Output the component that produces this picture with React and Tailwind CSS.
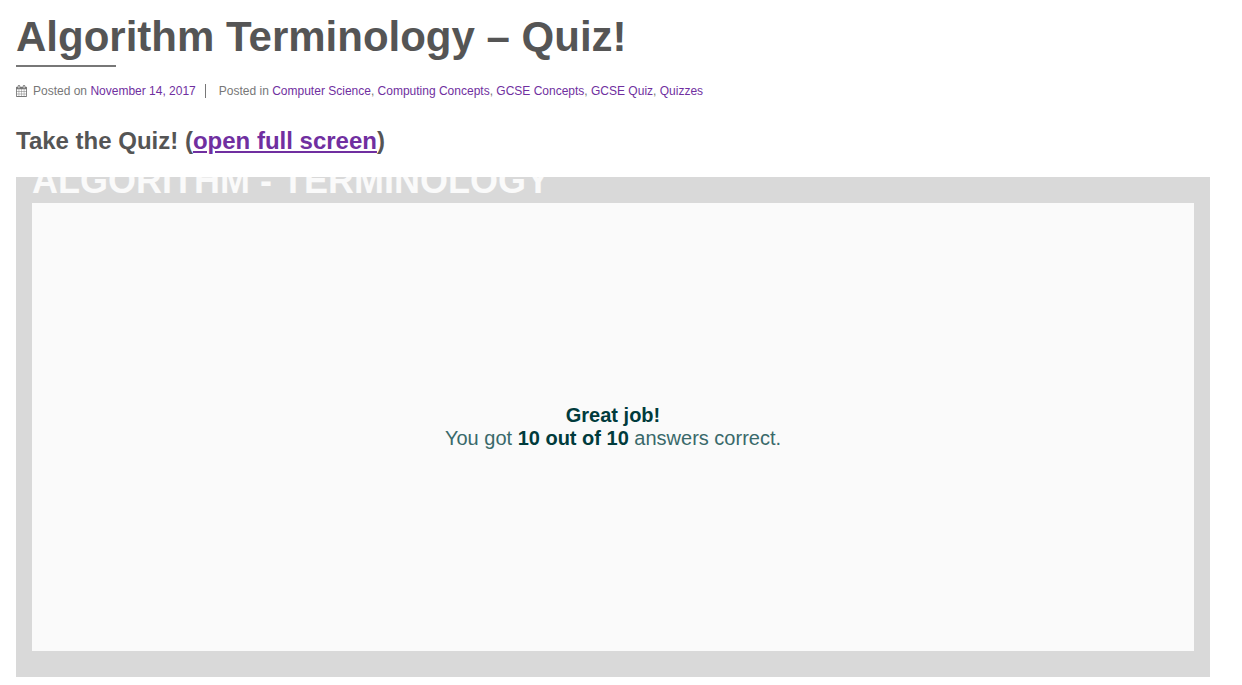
const categories = [
  "Computer Science",
  "Computing Concepts",
  "GCSE Concepts",
  "GCSE Quiz",
  "Quizzes",
];

function PostHeader() {
  return (
    <header>
      <h1 className="text-[42px] leading-[50px] font-bold text-[#555]">
        Algorithm Terminology – Quiz!
      </h1>
      <div className="mt-[3px] h-0.5 w-25 bg-[#777]" />
      <div className="mt-4 flex items-center text-xs text-[#777]">
        <CalendarIcon />
        <p className="ml-1.5 border-r border-[#777] pr-[9px] leading-[14px]">
          Posted on{" "}
          <a href="#date" className="text-[#702fa0]">
            November 14, 2017
          </a>
        </p>
        <p className="ml-[13px]">
          Posted in{" "}
          {categories.map((name, i) => (
            <span key={name}>
              {i > 0 && ", "}
              <a href="#category" className="text-[#702fa0]">
                {name}
              </a>
            </span>
          ))}
        </p>
      </div>
    </header>
  );
}

function CalendarIcon() {
  return (
    <svg
      className="h-3 w-[11px] shrink-0"
      viewBox="0 0 1664 1792"
      fill="currentColor"
      aria-hidden="true"
    >
      <path d="M128 1664h288v-288h-288v288zm352 0h320v-288h-320v288zm-352-352h288v-320h-288v320zm352 0h320v-320h-320v320zm-352-384h288v-288h-288v288zm736 736h320v-288h-320v288zm-384-736h320v-288h-320v288zm768 736h288v-288h-288v288zm-384-352h320v-320h-320v320zm-352-864v-288q0-13-9.500-22.500t-22.500-9.500h-64q-13 0-22.500 9.500t-9.500 22.500v288q0 13 9.500 22.500t22.500 9.500h64q13 0 22.500-9.500t9.500-22.500zm736 864h288v-320h-288v320zm-384-384h320v-288h-320v288zm384 0h288v-288h-288v288zm32-480v-288q0-13-9.500-22.500t-22.500-9.500h-64q-13 0-22.500 9.500t-9.500 22.500v288q0 13 9.500 22.500t22.500 9.500h64q13 0 22.500-9.500t9.500-22.500zm384-64v1280q0 52-38 90t-90 38h-1408q-52 0-90-38t-38-90v-1280q0-52 38-90t90-38h128v-96q0-66 47-113t113-47h64q66 0 113 47t47 113v96h384v-96q0-66 47-113t113-47h64q66 0 113 47t47 113v96h128q52 0 90 38t38 90z" />
    </svg>
  );
}

function QuizPanel() {
  return (
    <section className="mt-5 flex h-[500px] flex-col overflow-hidden bg-[#d9d9d9] px-4 pb-[26px]">
      <h3 className="-mt-[18px] h-11 shrink-0 text-4xl leading-[44px] font-bold text-[#fafafa] uppercase">
        Algorithm - Terminology
      </h3>
      <div className="flex grow flex-col items-center justify-center bg-[#fafafa] text-center text-xl leading-[23px] text-[#39696a]">
        <strong className="text-[#003b3c]">Great job!</strong>
        <p>
          You got <strong className="text-[#003b3c]">10 out of 10</strong>{" "}
          answers correct.
        </p>
      </div>
    </section>
  );
}

export default function App() {
  return (
    <main className="bg-white pt-3 pr-8 pb-2 pl-4 font-['Liberation_Sans',Arial,sans-serif]">
      <PostHeader />
      <h2 className="mt-[26px] text-2xl leading-8 font-bold text-[#555]">
        Take the Quiz! (
        <a href="#quiz" className="text-[#702fa0] underline">
          open full screen
        </a>
        )
      </h2>
      <QuizPanel />
    </main>
  );
}
